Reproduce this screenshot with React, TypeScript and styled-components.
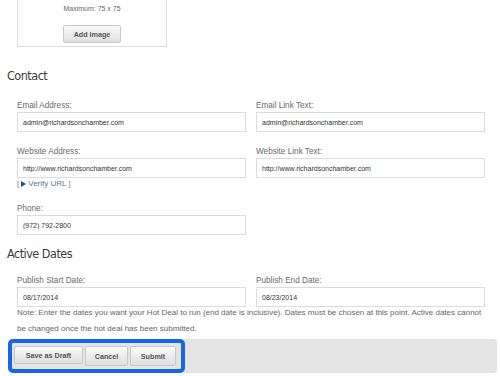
import React from "react";
import styled, { createGlobalStyle } from "styled-components";

const Global = createGlobalStyle`
  html, body { margin: 0; padding: 0; background: #ffffff; }
  body { font-family: "Liberation Sans", Arial, sans-serif; color: #333; }
`;

const Page = styled.div`
  width: 500px;
  height: 376px;
  overflow: hidden;
  display: flex;
  flex-direction: column;
  padding: 0 3px 0 7px;
  box-sizing: border-box;
`;

const ImageBox = styled.div`
  margin-left: 10px;
  width: 150px;
  height: 47px;
  box-sizing: border-box;
  border: 1px solid #dcdcdc;
  border-top: none;
  display: flex;
  flex-direction: column;
  align-items: center;
`;

const Hint = styled.div`
  font-size: 7px;
  line-height: 10px;
  margin-top: 4px;
  color: #666;
`;

const GreyButton = styled.button<{ $w: number }>`
  width: ${(p) => p.$w}px;
  height: ${(p) => (p.$w > 55 ? 18 : 20)}px;
  box-sizing: border-box;
  padding: 0;
  border: 1px solid #c9c9c9;
  border-radius: 2px;
  background: linear-gradient(#fbfbfb, #dedede);
  font-family: "Liberation Sans", Arial, sans-serif;
  font-weight: bold;
  font-size: 7.2px;
  color: #555;
  cursor: pointer;
`;

const AddButton = styled(GreyButton)`
  margin-top: 11px;
`;

const Heading = styled.h2<{ $top: number }>`
  margin: ${(p) => p.$top}px 0 0 0;
  font-family: "Liberation Sans Narrow", "DejaVu Sans Condensed", sans-serif;
  font-weight: normal;
  font-size: 12.5px;
  letter-spacing: -0.5px;
  line-height: 20px;
  color: #3a3a3a;
`;

const Grid = styled.div<{ $top: number }>`
  margin: ${(p) => p.$top}px 0 0 10px;
  display: grid;
  grid-template-columns: 229px 229px;
  column-gap: 10px;
  row-gap: 14px;
`;

const Field = styled.div`
  display: flex;
  flex-direction: column;
`;

const Label = styled.label`
  font-size: 8.2px;
  line-height: 12px;
  color: #6a6a6a;
`;

const Input = styled.input`
  height: 20px;
  box-sizing: border-box;
  border: 1px solid #dcdcdc;
  padding: 0 5px;
  font-family: "Liberation Sans", Arial, sans-serif;
  font-size: 7px;
  color: #333;
  outline: none;
`;

const Verify = styled.div`
  font-size: 8px;
  line-height: 11px;
  color: #888;
  display: flex;
  align-items: center;
  gap: 2px;
`;

const VerifyLink = styled.a`
  color: #5a7590;
  text-decoration: none;
  display: inline-flex;
  align-items: center;
  gap: 2px;
`;

const Note = styled.p`
  margin: -2px 0 0 10px;
  width: 470px;
  font-size: 8px;
  line-height: 15.5px;
  color: #666;
`;

const Bar = styled.div`
  margin-top: 3px;
  margin-left: 1px;
  height: 34px;
  width: 489px;
  background: #e4e4e4;
  border-radius: 4px;
  display: flex;
`;

const Highlight = styled.div`
  box-sizing: border-box;
  border: 4px solid #1667e8;
  border-radius: 5px;
  padding: 3px 5px 3px 2px;
  display: flex;
  gap: 2px;
  height: 34px;
`;

const Triangle = () => (
  <svg width="5" height="6" viewBox="0 0 5 6">
    <path d="M0 0 L5 3 L0 6 Z" fill="#1d4f8f" />
  </svg>
);

export default function App() {
  return (
    <>
      <Global />
      <Page>
        <ImageBox>
          <Hint>Maximum: 75 x 75</Hint>
          <AddButton $w={58}>Add Image</AddButton>
        </ImageBox>

        <Heading $top={19}>Contact</Heading>
        <Grid $top={14}>
          <Field>
            <Label>Email Address:</Label>
            <Input defaultValue="admin@richardsonchamber.com" />
          </Field>
          <Field>
            <Label>Email Link Text:</Label>
            <Input defaultValue="admin@richardsonchamber.com" />
          </Field>
          <Field>
            <Label>Website Address:</Label>
            <Input defaultValue="http://www.richardsonchamber.com" />
            <Verify>
              [ <VerifyLink href="#"><Triangle />Verify URL</VerifyLink> ]
            </Verify>
          </Field>
          <Field>
            <Label>Website Link Text:</Label>
            <Input defaultValue="http://www.richardsonchamber.com" />
          </Field>
          <Field>
            <Label>Phone:</Label>
            <Input defaultValue="(972) 792-2800" />
          </Field>
        </Grid>

        <Heading $top={9}>Active Dates</Heading>
        <Grid $top={11}>
          <Field>
            <Label>Publish Start Date:</Label>
            <Input defaultValue="08/17/2014" />
          </Field>
          <Field>
            <Label>Publish End Date:</Label>
            <Input defaultValue="08/23/2014" />
          </Field>
        </Grid>
        <Note>
          Note: Enter the dates you want your Hot Deal to run (end date is inclusive). Dates must be chosen at this point. Active dates cannot be changed once the hot deal has been submitted.
        </Note>

        <Bar>
          <Highlight>
            <GreyButton $w={69}>Save as Draft</GreyButton>
            <GreyButton $w={43}>Cancel</GreyButton>
            <GreyButton $w={46}>Submit</GreyButton>
          </Highlight>
        </Bar>
      </Page>
    </>
  );
}
